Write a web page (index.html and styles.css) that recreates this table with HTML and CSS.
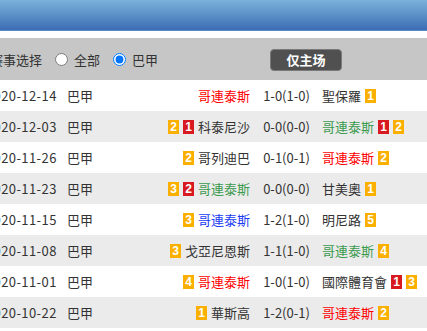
FILE: index.html
```html
<!DOCTYPE html>
<html>
<head>
<meta charset="utf-8">
<link rel="stylesheet" href="styles.css">
</head>
<body>
<div class="topbar"></div>
<div class="filter">
  <span class="label">赛事选择</span>
  <label class="opt"><input type="radio" name="lg"><span>全部</span></label>
  <label class="opt"><input type="radio" name="lg" checked><span>巴甲</span></label>
  <button class="btn">仅主场</button>
</div>
<div class="table">
  <div class="row">
    <div class="date">2020-12-14</div><div class="lg">巴甲</div>
    <div class="home"><span class="red">哥連泰斯</span></div>
    <div class="score">1-0(1-0)</div>
    <div class="away"><span>聖保羅</span><i class="b y">1</i></div>
  </div>
  <div class="row alt">
    <div class="date">2020-12-03</div><div class="lg">巴甲</div>
    <div class="home"><i class="b y">2</i><i class="b r">1</i><span>科泰尼沙</span></div>
    <div class="score">0-0(0-0)</div>
    <div class="away"><span class="green">哥連泰斯</span><i class="b r">1</i><i class="b y">2</i></div>
  </div>
  <div class="row">
    <div class="date">2020-11-26</div><div class="lg">巴甲</div>
    <div class="home"><i class="b y">2</i><span>哥列迪巴</span></div>
    <div class="score">0-1(0-1)</div>
    <div class="away"><span class="red">哥連泰斯</span><i class="b y">2</i></div>
  </div>
  <div class="row alt">
    <div class="date">2020-11-23</div><div class="lg">巴甲</div>
    <div class="home"><i class="b y">3</i><i class="b r">2</i><span class="green">哥連泰斯</span></div>
    <div class="score">0-0(0-0)</div>
    <div class="away"><span>甘美奧</span><i class="b y">1</i></div>
  </div>
  <div class="row">
    <div class="date">2020-11-15</div><div class="lg">巴甲</div>
    <div class="home"><i class="b y">3</i><span class="blue">哥連泰斯</span></div>
    <div class="score">1-2(1-0)</div>
    <div class="away"><span>明尼路</span><i class="b y">5</i></div>
  </div>
  <div class="row alt">
    <div class="date">2020-11-08</div><div class="lg">巴甲</div>
    <div class="home"><i class="b y">3</i><span>戈亞尼恩斯</span></div>
    <div class="score">1-1(1-0)</div>
    <div class="away"><span class="green">哥連泰斯</span><i class="b y">4</i></div>
  </div>
  <div class="row">
    <div class="date">2020-11-01</div><div class="lg">巴甲</div>
    <div class="home"><i class="b y">4</i><span class="red">哥連泰斯</span></div>
    <div class="score">1-0(1-0)</div>
    <div class="away"><span>國際體育會</span><i class="b r">1</i><i class="b y">3</i></div>
  </div>
  <div class="row alt">
    <div class="date">2020-10-22</div><div class="lg">巴甲</div>
    <div class="home"><i class="b y">1</i><span>華斯高</span></div>
    <div class="score">1-2(0-1)</div>
    <div class="away"><span class="red">哥連泰斯</span><i class="b y">2</i></div>
  </div>
</div>
</body>
</html>
```

FILE: styles.css
```css
html, body {
  margin: 0;
  padding: 0;
  background: #fff;
  overflow: hidden;
}
body {
  font-family: "Noto Sans CJK SC", "Noto Sans", sans-serif;
  font-size: 13px;
  color: #333;
}
.topbar {
  height: 31px;
  background: linear-gradient(to bottom, #79b2db, #3d6db4);
  border-bottom: 1px solid #5b8ac8;
  box-sizing: border-box;
}
.filter {
  margin-top: 7px;
  height: 42px;
  background: #c6c6c6;
  display: flex;
  align-items: center;
  margin-left: -10px;
  white-space: nowrap;
}
.label {
  margin-right: 11px;
}
.opt {
  display: flex;
  align-items: center;
  margin-right: 11px;
}
.opt input {
  margin: 0 6px 0 2px;
  width: 13px;
  height: 13px;
}
.btn {
  margin-left: 101px;
  margin-top: 1px;
  width: 72px;
  height: 22px;
  border-radius: 4px;
  background: #505050;
  border: 1px solid #7a7a7a;
  color: #fff;
  font-family: inherit;
  font-size: 13px;
  font-weight: bold;
  padding: 0;
  line-height: 20px;
}
.table {
  margin-left: -16px;
}
.row {
  display: grid;
  grid-template-columns: 80px 76px 113px 67px 1fr;
  height: 31px;
  align-items: center;
  white-space: nowrap;
}
.row.alt {
  background: #ebebeb;
}
.date { padding-left: 2px; letter-spacing: 0.4px; }
.lg { padding-left: 3px; }
.home {
  display: flex;
  justify-content: flex-end;
  align-items: center;
  padding-right: 3px;
}
.score { text-align: center; }
.away {
  display: flex;
  align-items: center;
  padding-left: 2px;
}
.b {
  font-style: normal;
  display: inline-block;
  width: 11px;
  height: 14px;
  line-height: 14px;
  text-align: center;
  color: #fff;
  font-weight: bold;
  font-size: 12px;
  font-family: "Liberation Sans", sans-serif;
}
.b.y { background: #fbb000; }
.b.r { background: #d8191f; }
.home .b { margin-right: 4px; }
.away .b { margin-left: 4px; }
.away .b + .b { margin-left: 4px; }
.red { color: #ff0000; }
.green { color: #3a9a4e; }
.blue { color: #1a3cf5; }
```
